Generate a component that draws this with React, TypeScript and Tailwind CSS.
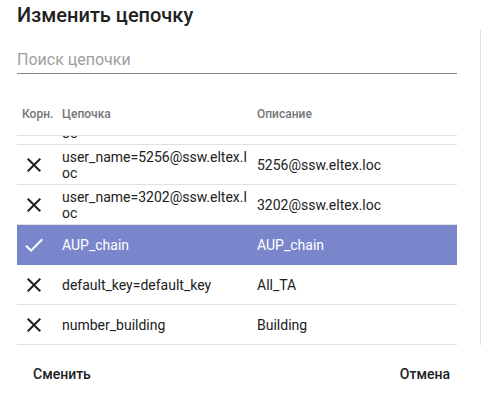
type ChainRow = {
  chain: string;
  description: string;
  root: boolean;
};

const rows: ChainRow[] = [
  { chain: "user_name=5256@ssw.eltex.loc", description: "5256@ssw.eltex.loc", root: false },
  { chain: "user_name=3202@ssw.eltex.loc", description: "3202@ssw.eltex.loc", root: false },
  { chain: "AUP_chain", description: "AUP_chain", root: true },
  { chain: "default_key=default_key", description: "All_TA", root: false },
  { chain: "number_building", description: "Building", root: false },
];

function CloseIcon() {
  return (
    <svg width="24" height="24" viewBox="0 0 24 24" className="fill-[#212121]">
      <path d="M19 6.41L17.59 5 12 10.59 6.41 5 5 6.41 10.59 12 5 17.59 6.41 19 12 13.41 17.59 19 19 17.59 13.41 12z" />
    </svg>
  );
}

function CheckIcon() {
  return (
    <svg width="24" height="24" viewBox="0 0 24 24" className="fill-white">
      <path d="M9 16.17L4.83 12l-1.42 1.41L9 19 21 7l-1.41-1.41z" />
    </svg>
  );
}

function Row({ row, selected, className = "" }: { row: ChainRow; selected?: boolean; className?: string }) {
  return (
    <div
      className={
        "grid grid-cols-[45px_195px_1fr] h-[40px] items-center border-b text-[14px] leading-[16px] " +
        (selected
          ? "bg-[#7986cb] border-[#7986cb] text-white "
          : "border-[#e0e0e0] text-[#212121] ") +
        className
      }
    >
      <div className="pl-[5px] flex items-center">
        {selected ? <CheckIcon /> : <CloseIcon />}
      </div>
      <div className="pr-[5px] break-all">{row.chain}</div>
      <div className="break-all">{row.description}</div>
    </div>
  );
}

export default function App() {
  return (
    <div className="w-[482px] h-[393px] bg-white flex font-['Roboto',sans-serif] overflow-hidden">
      <div className="flex-1 flex flex-col pl-[17px] pr-[23px]">
        <h1 className="pt-[3px] text-[20px] leading-[24px] font-medium text-[#212121]">
          Изменить цепочку
        </h1>

        <div className="mt-[23px] pb-[3px] border-b border-[#8a8a8a]">
          <input
            className="block w-full h-[20px] text-[16px] leading-[20px] outline-none placeholder:text-[#9e9e9e] text-[#212121]"
            placeholder="Поиск цепочки"
          />
        </div>

        {/* Table header */}
        <div className="mt-[32px] pb-[13px] grid grid-cols-[45px_195px_1fr] border-b border-[#e0e0e0] text-[12px] leading-[16px] font-medium text-[#757575]">
          <div className="pl-[5px]">Корн.</div>
          <div>Цепочка</div>
          <div>Описание</div>
        </div>

        {/* Table body, scrolled a little */}
        <div className="h-[209px] overflow-hidden">
          <Row
            row={{ chain: "user_name=3417@ssw.eltex.loc", description: "3417@ssw.eltex.loc", root: false }}
            className="-mt-[31px]"
          />
          {rows.map((row, index) => (
            <Row key={index} row={row} selected={row.root} />
          ))}
        </div>

        <div className="mt-[19px] flex justify-between text-[14px] leading-[20px] font-medium text-[#212121]">
          <button className="pl-[16px]">Сменить</button>
          <button className="pr-[7px]">Отмена</button>
        </div>
      </div>
      <div className="w-[2px]">
        <div className="mt-[30px] h-[315px] w-px bg-[#e0e0e0]" />
      </div>
    </div>
  );
}
